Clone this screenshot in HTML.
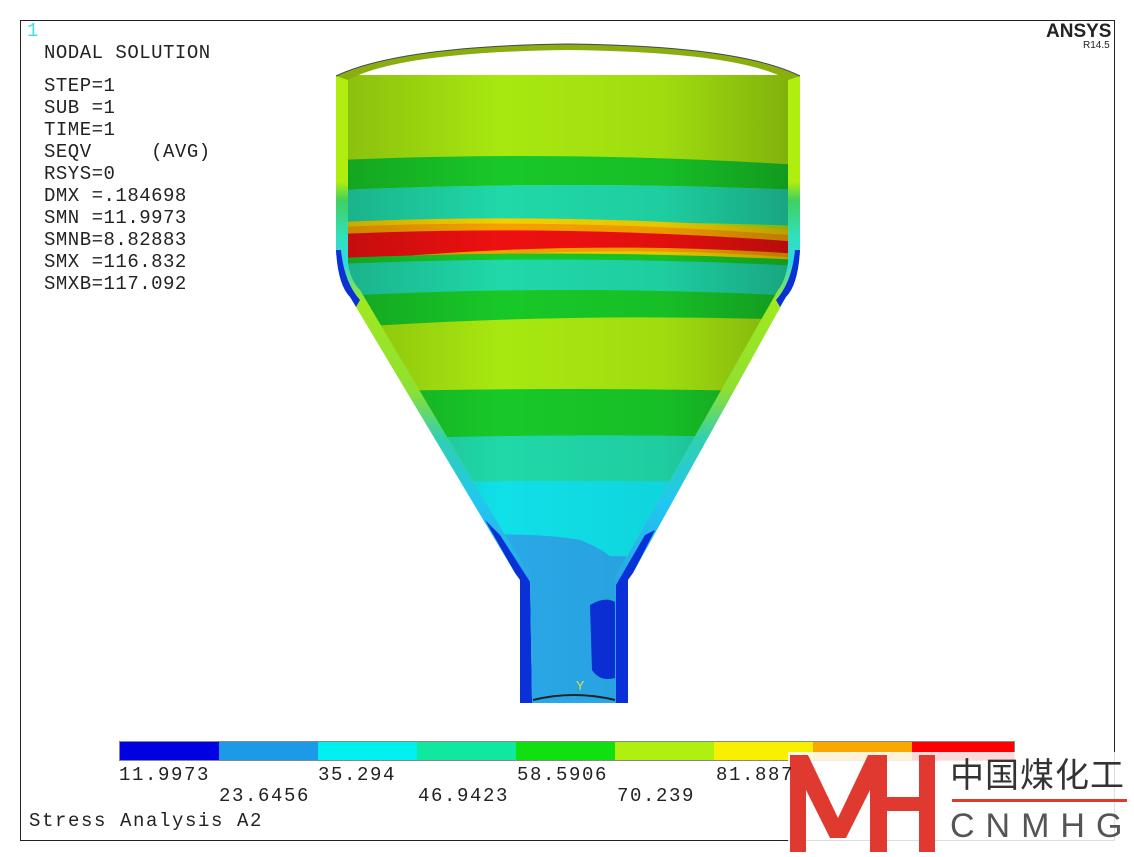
<!DOCTYPE html>
<html><head><meta charset="utf-8"><style>
html,body{margin:0;padding:0;background:#fff;}
body{width:1134px;height:857px;overflow:hidden;position:relative;}
.t{position:absolute;font-family:"Liberation Mono",monospace;font-size:19px;letter-spacing:0.5px;color:#222;white-space:pre;line-height:22px;}
.b{letter-spacing:1.6px;}
</style></head><body>
<svg width="1134" height="857" style="position:absolute;left:0;top:0">
<rect x="20.5" y="20.5" width="1094" height="820" fill="none" stroke="#222" stroke-width="1"/>
<defs>
<clipPath id="inner"><path d="M348,75 L788,75 L788,262 Q786,280 778,290 L615,577 L615,700 L532,700 L530,577 L360,290 Q350,280 348,262 Z"/></clipPath>
<clipPath id="outer"><path d="M336,75 L800,75 L800,250 Q798,285 786,297 L633,573 L628,580 L628,703 L520,703 L520,580 L515,573 L350,297 Q338,285 336,250 Z"/></clipPath>
<linearGradient id="wg" gradientUnits="userSpaceOnUse" x1="0" y1="75" x2="0" y2="703">
<stop offset="0" stop-color="#b0ee10"/>
<stop offset="0.17" stop-color="#b0ee10"/>
<stop offset="0.2" stop-color="#40d060"/>
<stop offset="0.26" stop-color="#30e0c0"/>
<stop offset="0.3" stop-color="#30d8e0"/>
<stop offset="0.36" stop-color="#a0e820"/>
<stop offset="0.5" stop-color="#90e030"/>
<stop offset="0.58" stop-color="#30d0b0"/>
<stop offset="0.68" stop-color="#20c8f0"/>
<stop offset="0.8" stop-color="#28a8e8"/>
<stop offset="1" stop-color="#28a8e8"/>
</linearGradient>
</defs>
<g clip-path="url(#outer)">
<rect x="330" y="40" width="480" height="680" fill="url(#wg)"/>
<path d="M330,250 Q338,285 350,297 L356,307 L360,300 Q344,282 341,250 Z" fill="#0a30d8"/>
<path d="M806,250 Q798,285 786,297 L780,307 L776,300 Q792,282 795,250 Z" fill="#0a30d8"/>
<path d="M485,520 L515,573 L520,580 L520,703 L532,703 L532,585 L500,535 Z" fill="#0a30d8"/>
<path d="M655,530 L633,573 L628,580 L628,703 L616,703 L616,585 L645,535 Z" fill="#0a30d8"/>
</g>
<g clip-path="url(#inner)">
<rect x="340" y="40" width="460" height="680" fill="#a8e810"/>
<path d="M340,160 Q568,150 800,165 L800,190 Q568,180 340,190 Z" fill="#18c828"/>
<path d="M340,190 Q568,180 800,190 L800,226 Q568,216 340,240 Z" fill="#20d8a8"/>
<path d="M340,222 Q568,212 800,230 L800,262 Q568,244 340,275 Z" fill="#f0d000"/>
<path d="M340,227 Q568,217 800,236 L800,258 Q568,240 340,270 Z" fill="#f7a000"/>
<path d="M340,234 Q568,224 800,242 L800,254 Q568,238 340,262 Z" fill="#ee1010"/>
<path d="M340,258 Q568,248 800,260 L800,272 Q568,262 340,280 Z" fill="#18c828"/>
<path d="M340,264 Q568,254 800,266 L800,296 Q568,286 340,302 Z" fill="#20d8a8"/>
<path d="M340,296 Q568,284 800,296 L800,320 Q568,312 340,328 Z" fill="#18c828"/>
<path d="M340,392 Q568,386 800,392 L800,438 Q568,432 340,442 Z" fill="#18c828"/>
<path d="M340,440 Q568,432 800,438 L800,485 Q568,480 340,490 Z" fill="#20d8a8"/>
<path d="M340,484 Q568,478 800,484 L800,720 L340,720 Z" fill="#10e0e8"/>
<path d="M340,542 Q520,528 580,540 Q600,548 610,556 L800,560 L800,720 L340,720 Z" fill="#2aa8e8"/>
<path d="M590,605 Q605,596 615,602 L615,678 Q600,682 592,670 Z" fill="#0a30d8"/>
<linearGradient id="sh" x1="0" x2="1"><stop offset="0" stop-color="#000" stop-opacity="0.18"/><stop offset="0.35" stop-color="#000" stop-opacity="0"/><stop offset="0.7" stop-color="#000" stop-opacity="0.05"/><stop offset="1" stop-color="#000" stop-opacity="0.25"/></linearGradient>
<rect x="340" y="40" width="460" height="680" fill="url(#sh)"/>
</g>
<path d="M336,76 Q400,46 568,44 Q740,46 800,76 L788,80 Q740,52 568,50 Q400,52 348,80 Z" fill="#8aae10"/>
<path d="M336,76 Q400,46 568,44 Q740,46 800,76" fill="none" stroke="#445" stroke-width="1"/>
<path d="M533,700 Q574,690 615,700" fill="none" stroke="#222" stroke-width="2"/>
<text x="576" y="690" font-family="Liberation Mono" font-size="14" fill="#dddd40">Y</text>
<g>
<rect x="120" y="742" width="100" height="18" fill="#0000e0"/>
<rect x="219" y="742" width="100" height="18" fill="#1c9ae8"/>
<rect x="318" y="742" width="100" height="18" fill="#00f0f0"/>
<rect x="417" y="742" width="100" height="18" fill="#10e8a0"/>
<rect x="516" y="742" width="100" height="18" fill="#10e010"/>
<rect x="615" y="742" width="100" height="18" fill="#b0f010"/>
<rect x="714" y="742" width="100" height="18" fill="#f8f000"/>
<rect x="813" y="742" width="100" height="18" fill="#f8a800"/>
<rect x="912" y="742" width="102" height="18" fill="#ff0000"/>
<rect x="119.5" y="741.5" width="895" height="19" fill="none" stroke="#888"/>
</g>
<rect x="788" y="752" width="346" height="105" fill="#fff" opacity="0.85"/>
<path d="M790,755 L808,755 L838,818 L868,755 L887,755 L887,852 L870,852 L870,790 L846,838 L830,838 L806,790 L806,852 L790,852 Z" fill="#e03a30"/>
<rect x="919" y="755" width="16" height="97" fill="#e03a30"/>
<rect x="886" y="797" width="34" height="14" fill="#e03a30"/>
<rect x="952" y="799" width="175" height="3" fill="#e03a30"/>
</svg>
<div class="t" style="left:27px;top:20px;color:#40e0e0">1</div>
<div class="t" style="left:44px;top:42px">NODAL SOLUTION</div>
<div class="t" style="left:44px;top:75px">STEP=1
SUB =1
TIME=1
SEQV     (AVG)
RSYS=0
DMX =.184698
SMN =11.9973
SMNB=8.82883
SMX =116.832
SMXB=117.092</div>
<div class="t" style="left:1046px;top:21px;font-family:'Liberation Sans',sans-serif;font-weight:bold;font-size:19px;letter-spacing:0">ANSYS</div>
<div class="t" style="left:1083px;top:40px;font-family:'Liberation Sans',sans-serif;font-size:10px;line-height:12px;letter-spacing:0">R14.5</div>
<div class="t b" style="left:119px;top:764px">11.9973</div>
<div class="t b" style="left:318px;top:764px">35.294</div>
<div class="t b" style="left:517px;top:764px">58.5906</div>
<div class="t b" style="left:716px;top:764px">81.887</div>
<div class="t b" style="left:219px;top:785px">23.6456</div>
<div class="t b" style="left:418px;top:785px">46.9423</div>
<div class="t b" style="left:617px;top:785px">70.239</div>
<div class="t b" style="left:29px;top:810px">Stress Analysis A2</div>
<div class="t" style="left:950px;top:756px;font-family:'Liberation Sans','Noto Sans CJK SC',sans-serif;font-size:34px;line-height:40px;color:#333;letter-spacing:1px">中国煤化工</div>
<div class="t" style="left:950px;top:806px;font-family:'Liberation Sans',sans-serif;font-size:34px;line-height:40px;color:#555;letter-spacing:11px">CNMHG</div>
</body></html>
